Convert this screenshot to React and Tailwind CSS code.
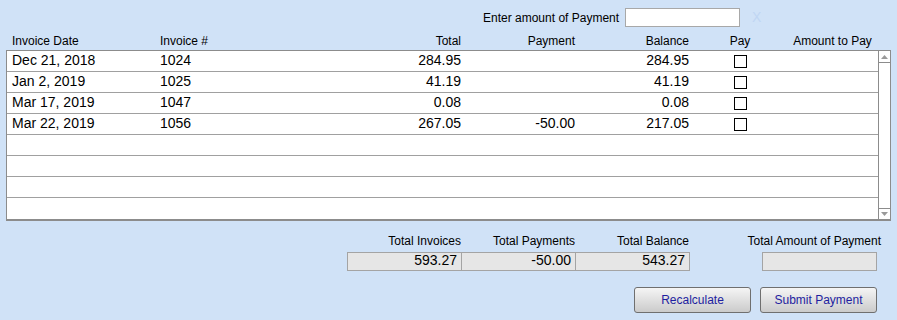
import React from "react";

const invoices = [
  { date: "Dec 21, 2018", number: "1024", total: "284.95", payment: "", balance: "284.95" },
  { date: "Jan 2, 2019", number: "1025", total: "41.19", payment: "", balance: "41.19" },
  { date: "Mar 17, 2019", number: "1047", total: "0.08", payment: "", balance: "0.08" },
  { date: "Mar 22, 2019", number: "1056", total: "267.05", payment: "-50.00", balance: "217.05" },
];

const emptyRows = 4;

function Cells({ row, header }) {
  const text = header ? "text-[12px] leading-[14px]" : "text-[14px] leading-[18px]";
  return (
    <>
      <div className={`w-[148px] shrink-0 pl-[5px] ${text}`}>{row.date}</div>
      <div className={`w-[195px] shrink-0 pl-[5px] ${text}`}>{row.number}</div>
      <div className={`w-[115px] shrink-0 pr-[4px] text-right ${text}`}>{row.total}</div>
      <div className={`w-[114px] shrink-0 pr-[4px] text-right ${text}`}>{row.payment}</div>
      <div className={`w-[114px] shrink-0 pr-[4px] text-right ${text}`}>{row.balance}</div>
      <div className={`w-[94px] shrink-0 flex justify-center ${text}`}>
        {header ? "Pay" : row.date ? (
          <div className="mt-[4px] w-[13px] h-[13px] border border-black bg-white" />
        ) : null}
      </div>
      <div className={`w-[91px] shrink-0 text-center ${text}`}>{header ? "Amount to Pay" : ""}</div>
    </>
  );
}

function Arrow({ down }) {
  return (
    <svg width="7" height="4" viewBox="0 0 7 4">
      <path d={down ? "M0 0 H7 L3.5 4 Z" : "M0 4 H7 L3.5 0 Z"} fill="#9a9a9a" />
    </svg>
  );
}

export default function App() {
  const rows = [...invoices, ...Array.from({ length: emptyRows }, () => ({}))];

  return (
    <div className="w-[897px] h-[320px] bg-[#d0e2f7] font-['Liberation_Sans',Arial,sans-serif] text-black overflow-hidden">
      {/* Payment amount entry */}
      <div className="flex items-center pt-[8px] h-[34px] items-start">
        <div className="flex items-center h-[19px] pl-[483px]">
          <span className="text-[12px] w-[142px]">Enter amount of Payment</span>
          <input
            type="text"
            className="w-[115px] h-[19px] bg-white border border-[#a8a8a8] outline-none"
          />
          <span className="ml-[12px] text-[14px] text-[#c0d6f3]">X</span>
        </div>
      </div>

      {/* Header */}
      <div className="flex h-[16px] pl-[7px]">
        <Cells
          header
          row={{ date: "Invoice Date", number: "Invoice #", total: "Total", payment: "Payment", balance: "Balance" }}
        />
      </div>

      {/* Invoice table */}
      <div className="ml-[6px] w-[885px] flex border border-[#8c8c8c] border-b-2 bg-white">
        <div className="w-[871px]">
          {rows.map((row, i) => (
            <div
              key={i}
              className={`flex h-[21px] ${i < rows.length - 1 ? "border-b border-[#a0a0a0]" : ""}`}
            >
              <Cells row={row} />
            </div>
          ))}
        </div>
        <div className="flex-1 flex flex-col border-l border-[#8c8c8c]">
          <div className="h-[12px] border-b border-[#8c8c8c] flex items-center justify-center">
            <Arrow />
          </div>
          <div className="flex-1" />
          <div className="h-[11px] border-t border-[#8c8c8c] flex items-center justify-center">
            <Arrow down />
          </div>
        </div>
      </div>

      {/* Totals */}
      <div className="flex mt-[13px] pl-[347px]">
        {[
          ["Total Invoices", "593.27", "w-[115px] border-l"],
          ["Total Payments", "-50.00", "w-[114px]"],
          ["Total Balance", "543.27", "w-[114px]"],
        ].map(([label, value, cls]) => (
          <div key={label} className="flex flex-col">
            <div className="text-[12px] leading-[14px] text-right pr-px">{label}</div>
            <div
              className={`mt-[4px] h-[19px] bg-[#e6e6e6] border-y border-r border-[#a4a4a4] text-right pr-[4px] text-[14px] leading-[15px] ${cls}`}
            >
              {value}
            </div>
          </div>
        ))}
        <div className="ml-[54px] flex flex-col w-[137px]">
          <div className="text-[12px] leading-[14px] text-right">Total Amount of Payment</div>
          <div className="mt-[4px] ml-[18px] w-[115px] h-[19px] bg-[#e6e6e6] border border-[#a4a4a4]" />
        </div>
      </div>

      {/* Actions */}
      <div className="flex mt-[16px] pl-[634px] gap-[9px]">
        {["Recalculate", "Submit Payment"].map((label) => (
          <button
            key={label}
            type="button"
            className="w-[117px] h-[26px] rounded-[3px] border border-[#6f6f6f] bg-gradient-to-b from-[#f5f5f5] to-[#cbcbcb] text-[12px] text-[#1e1ea0]"
          >
            {label}
          </button>
        ))}
      </div>
    </div>
  );
}
